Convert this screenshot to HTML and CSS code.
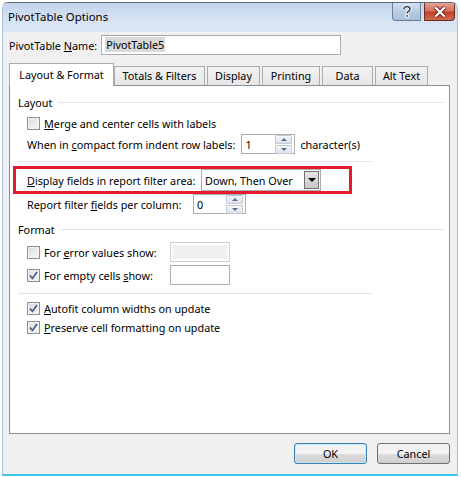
FILE: index.html
```html
<!DOCTYPE html>
<html lang="en">

<head>
    <meta charset="UTF-8">
    <title>PivotTable Options</title>
    <link rel="stylesheet" href="styles.css">
</head>

<body>
<div class="window">
    <div class="titlebar">
        <span class="title">PivotTable Options</span>
        <div class="caption-buttons">
            <div class="cap-btn help">
                <svg width="12" height="13" viewBox="0 0 12 13">
                    <path d="M3 4.2 Q3 1.5 6 1.5 Q9 1.5 9 4 Q9 5.6 7 6.6 Q6.2 7.1 6.2 8.3" fill="none" stroke="#fff" stroke-width="3.4"/>
                    <path d="M3 4.2 Q3 1.5 6 1.5 Q9 1.5 9 4 Q9 5.6 7 6.6 Q6.2 7.1 6.2 8.3" fill="none" stroke="#38475c" stroke-width="1.6"/>
                    <rect x="4.8" y="9.6" width="2.8" height="2.6" fill="#38475c" stroke="#fff" stroke-width="1"/>
                </svg>
            </div>
            <div class="cap-btn close">
                <svg width="14" height="12" viewBox="0 0 14 12">
                    <path d="M2.5 1.5 L11.5 10.5 M11.5 1.5 L2.5 10.5" stroke="#5a2418" stroke-width="4"/>
                    <path d="M2.5 1.5 L11.5 10.5 M11.5 1.5 L2.5 10.5" stroke="#fff" stroke-width="2.2"/>
                </svg>
            </div>
        </div>
    </div>

    <div class="client">
        <div class="name-row">
            <span>PivotTable <u>N</u>ame:</span>
            <div class="textbox name-box"><span class="selected">PivotTable5</span></div>
        </div>

        <div class="tabs">
            <div class="tab active">Layout &amp; Format</div>
            <div class="tab tab-totals">Totals &amp; Filters</div>
            <div class="tab tab-display">Display</div>
            <div class="tab tab-printing">Printing</div>
            <div class="tab tab-data">Data</div>
            <div class="tab tab-alt">Alt Text</div>
        </div>

        <div class="panel">
            <div class="group-head"><span>Layout</span><div class="group-line"></div></div>

            <div class="row row-merge">
                <span class="checkbox"></span>
                <span><u>M</u>erge and center cells with labels</span>
            </div>

            <div class="row row-compact">
                <span>When in <u>c</u>ompact form indent row labels:</span>
                <div class="spinner spin-indent">
                    <span class="spin-value">1</span>
                    <div class="spin-buttons">
                        <div class="spin-btn up"><span class="arrow-up"></span></div>
                        <div class="spin-btn down"><span class="arrow-down"></span></div>
                    </div>
                </div>
                <span>character(s)</span>
            </div>

            <div class="separator"></div>

            <div class="highlight">
                <div class="row row-display">
                    <span class="display-label"><u>D</u>isplay fields in report filter area:</span>
                    <div class="combo">
                        <span class="combo-value">Down, Then Over</span>
                        <div class="combo-btn"><span class="arrow-black"></span></div>
                    </div>
                </div>
            </div>

            <div class="row row-report">
                <span class="report-label">Report filter <u>f</u>ields per column:</span>
                <div class="spinner spin-report">
                    <span class="spin-value">0</span>
                    <div class="spin-buttons">
                        <div class="spin-btn up"><span class="arrow-up"></span></div>
                        <div class="spin-btn down"><span class="arrow-down"></span></div>
                    </div>
                </div>
            </div>

            <div class="group-head format-head"><span>Format</span><div class="group-line"></div></div>

            <div class="row row-error">
                <span class="checkbox"></span>
                <span class="check-label">For <u>e</u>rror values show:</span>
                <div class="textbox small-box disabled"></div>
            </div>

            <div class="row row-empty">
                <span class="checkbox checked">
                    <svg width="9" height="9" viewBox="0 0 9 9"><path d="M1 4.6 L3.4 7.4 L8 1" fill="none" stroke="#42578a" stroke-width="1.6"/></svg>
                </span>
                <span class="check-label">For empty cells <u>s</u>how:</span>
                <div class="textbox small-box"></div>
            </div>

            <div class="separator sep-format"></div>

            <div class="row row-autofit">
                <span class="checkbox checked">
                    <svg width="9" height="9" viewBox="0 0 9 9"><path d="M1 4.6 L3.4 7.4 L8 1" fill="none" stroke="#42578a" stroke-width="1.6"/></svg>
                </span>
                <span><u>A</u>utofit column widths on update</span>
            </div>

            <div class="row row-preserve">
                <span class="checkbox checked">
                    <svg width="9" height="9" viewBox="0 0 9 9"><path d="M1 4.6 L3.4 7.4 L8 1" fill="none" stroke="#42578a" stroke-width="1.6"/></svg>
                </span>
                <span><u>P</u>reserve cell formatting on update</span>
            </div>
        </div>

        <div class="buttons">
            <div class="button default">OK</div>
            <div class="button">Cancel</div>
        </div>
    </div>
</div>
</body>

</html>
```

FILE: styles.css
```css
html, body {
    margin: 0;
    padding: 0;
    background: #fff;
}

body {
    font-family: "Noto Sans", "Open Sans", sans-serif;
    font-size: 10.8px;
    color: #000;
}

u {
    text-decoration: underline;
    text-underline-offset: 1px;
}

.window {
    margin: 2px 0 0 2px;
    width: 454px;
    height: 471px;
    border: 1px solid #a9c1de;
    border-top-color: #5d6b7c;
    border-bottom: 2px solid #3ac5ec;
    border-radius: 6px 6px 0 0;
    display: flex;
    flex-direction: column;
    overflow: hidden;
}

.titlebar {
    height: 29px;
    flex: none;
    display: flex;
    justify-content: space-between;
    background: linear-gradient(#c2d5ec, #d6e3f3 60%, #dce7f4);
}

.title {
    padding: 6px 0 0 5px;
    line-height: 16px;
    font-size: 11.4px;
}

.caption-buttons {
    display: flex;
    gap: 3px;
    margin-right: 2px;
    align-items: flex-start;
}

.cap-btn {
    height: 17px;
    border: 1px solid #6e7f95;
    border-top: none;
    display: flex;
    align-items: center;
    justify-content: center;
}

.cap-btn.help {
    width: 27px;
    border-radius: 0 0 0 4px;
    background: linear-gradient(#d3e0ef, #b9cce3 50%, #a9bfdb);
}

.cap-btn.close {
    width: 29px;
    border-color: #6b2d22;
    border-radius: 0 0 4px 0;
    background: linear-gradient(#e5a193, #d6705f 45%, #c2402a 55%, #d06a4e);
}

.client {
    flex: 1;
    background: #f0f0f0;
    padding: 3px 7px 0 6px;
    display: flex;
    flex-direction: column;
}

.name-row {
    display: flex;
    align-items: center;
    height: 20px;
    gap: 4px;
}

.textbox {
    background: #fff;
    border: 1px solid #abadb3;
    border-top-color: #a6a8ad;
    box-sizing: border-box;
}

.name-box {
    width: 240px;
    height: 20px;
    padding: 1px 0 0 3px;
    line-height: 16px;
}

.selected {
    background: #dadada;
    padding: 0 1px;
}

.tabs {
    display: flex;
    align-items: flex-end;
    margin-top: 7px;
    height: 23px;
    position: relative;
    z-index: 1;
}

.tab {
    height: 19px;
    box-sizing: border-box;
    border: 1px solid #acacac;
    border-bottom: none;
    background: linear-gradient(#f3f3f3, #e6e6e6);
    text-align: center;
    line-height: 18px;
    margin-right: 2px;
}

.tab.active {
    height: 23px;
    width: 105px;
    background: #fff;
    margin-right: 0;
    margin-bottom: -1px;
    line-height: 22px;
    padding-bottom: 1px;
}

.tab-totals { width: 91px; }
.tab-display { width: 53px; }
.tab-printing { width: 58px; }
.tab-data { width: 51px; }
.tab-alt { width: 53px; }

.panel {
    height: 349px;
    box-sizing: border-box;
    width: 441px;
    background: #fff;
    border: 1px solid #898c95;
    padding: 8px 6px 0 8px;
}

.group-head {
    display: flex;
    align-items: center;
    height: 16px;
    gap: 6px;
}

.group-line {
    flex: 1;
    height: 1px;
    background: #dce3ea;
}

.row {
    display: flex;
    align-items: center;
    height: 20px;
    padding-left: 9px;
}

.checkbox {
    width: 11px;
    height: 11px;
    border: 1px solid #8e8f8f;
    background: linear-gradient(135deg, #dcdcdc, #f6f6f6);
    box-shadow: inset 0 0 0 1px #f4f4f4;
    margin-right: 4px;
    display: flex;
    align-items: center;
    justify-content: center;
    flex: none;
}

.row-merge { margin-top: 3px; }
.row-compact { margin-top: 1px; gap: 5px; }

.spinner {
    height: 20px;
    box-sizing: border-box;
    border: 1px solid #abadb3;
    background: #fff;
    display: flex;
    align-items: center;
    justify-content: space-between;
}

.spin-indent { width: 54px; margin-left: 1px; }
.spin-report { width: 53px; }

.spin-value {
    padding-left: 3px;
}

.spin-buttons {
    display: flex;
    flex-direction: column;
    gap: 1px;
    margin-right: 2px;
}

.spin-btn {
    width: 15px;
    height: 7px;
    border: 1px solid #c4c9d2;
    border-radius: 1px;
    background: linear-gradient(#f4f6f9, #dde3ec);
    display: flex;
    align-items: center;
    justify-content: center;
}

.arrow-up {
    border-left: 3px solid transparent;
    border-right: 3px solid transparent;
    border-bottom: 3px solid #55708f;
}

.arrow-down {
    border-left: 3px solid transparent;
    border-right: 3px solid transparent;
    border-top: 3px solid #55708f;
}

.separator {
    height: 1px;
    width: 353px;
    background: #dce3ea;
    margin-top: 7px;
}

.highlight {
    margin: 4px 0 0 -5px;
    width: 333px;
    border: 3px solid #e31b2a;
}

.row-display {
    height: 22px;
    padding-left: 11px;
}

.display-label {
    width: 174px;
}

.combo {
    width: 120px;
    height: 22px;
    box-sizing: border-box;
    border: 1px solid #abadb3;
    background: #fff;
    display: flex;
    align-items: center;
    justify-content: space-between;
}

.combo-value {
    padding-left: 3px;
}

.combo-btn {
    width: 15px;
    height: 18px;
    margin-right: 1px;
    border: 1px solid #707070;
    box-sizing: border-box;
    background: linear-gradient(#e6e6e6, #c8c8c8);
    display: flex;
    align-items: center;
    justify-content: center;
}

.arrow-black {
    border-left: 4px solid transparent;
    border-right: 4px solid transparent;
    border-top: 4px solid #000;
}

.report-label {
    width: 166px;
}

.format-head { margin-top: 7px; }

.row-error { margin-top: 5px; }
.row-empty { margin-top: 3px; }

.check-label {
    width: 126px;
}

.small-box {
    width: 60px;
    height: 20px;
}

.small-box.disabled {
    background: #f0f0f0;
    box-shadow: inset 0 0 0 2px #fff;
    border-color: #cfcfcf;
}

.sep-format { margin-top: 8px; }

.row-autofit { margin-top: 5px; height: 18px; }
.row-preserve { margin-top: 1px; height: 18px; }

.buttons {
    display: flex;
    justify-content: flex-end;
    gap: 10px;
    margin-top: 9px;
}

.button {
    width: 73px;
    height: 21px;
    box-sizing: border-box;
    border: 1px solid #707070;
    border-radius: 3px;
    background: linear-gradient(#f2f2f2 50%, #dddddd 50%, #cfcfcf);
    text-align: center;
    line-height: 19px;
}

.button.default {
    border-color: #3c7fb1;
    box-shadow: inset 0 0 0 1px #c8e8f8;
}
```
